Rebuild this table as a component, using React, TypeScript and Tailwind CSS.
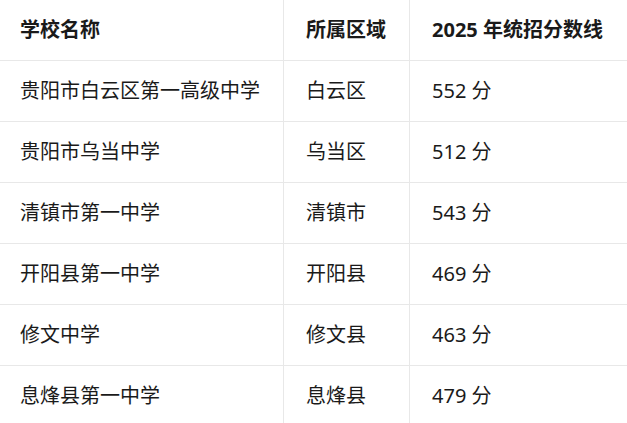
import React from "react";

const rows = [
  ["贵阳市白云区第一高级中学", "白云区", "552 分"],
  ["贵阳市乌当中学", "乌当区", "512 分"],
  ["清镇市第一中学", "清镇市", "543 分"],
  ["开阳县第一中学", "开阳县", "469 分"],
  ["修文中学", "修文县", "463 分"],
  ["息烽县第一中学", "息烽县", "479 分"],
];

export default function App() {
  return (
    <div
      className="w-[627px] h-[423px] overflow-hidden bg-white text-[#1a1a1a]"
      style={{ fontFamily: '"Noto Sans", "Noto Sans CJK SC", sans-serif' }}
    >
      <div className="grid grid-cols-[284px_126px_1fr] h-[61px] border-b border-[#e8e8e8] font-bold text-[20px]">
        <div className="flex items-center pl-[20px] border-r border-[#e8e8e8]">学校名称</div>
        <div className="flex items-center pl-[22px] border-r border-[#e8e8e8]">所属区域</div>
        <div className="flex items-center pl-[22px]">2025 年统招分数线</div>
      </div>
      {rows.map((r) => (
        <div
          key={r[0]}
          className="grid grid-cols-[284px_126px_1fr] h-[61px] border-b border-[#e8e8e8] text-[20px]"
        >
          <div className="flex items-center pl-[20px] border-r border-[#e8e8e8]">{r[0]}</div>
          <div className="flex items-center pl-[22px] border-r border-[#e8e8e8]">{r[1]}</div>
          <div className="flex items-center pl-[22px]">{r[2]}</div>
        </div>
      ))}
    </div>
  );
}
